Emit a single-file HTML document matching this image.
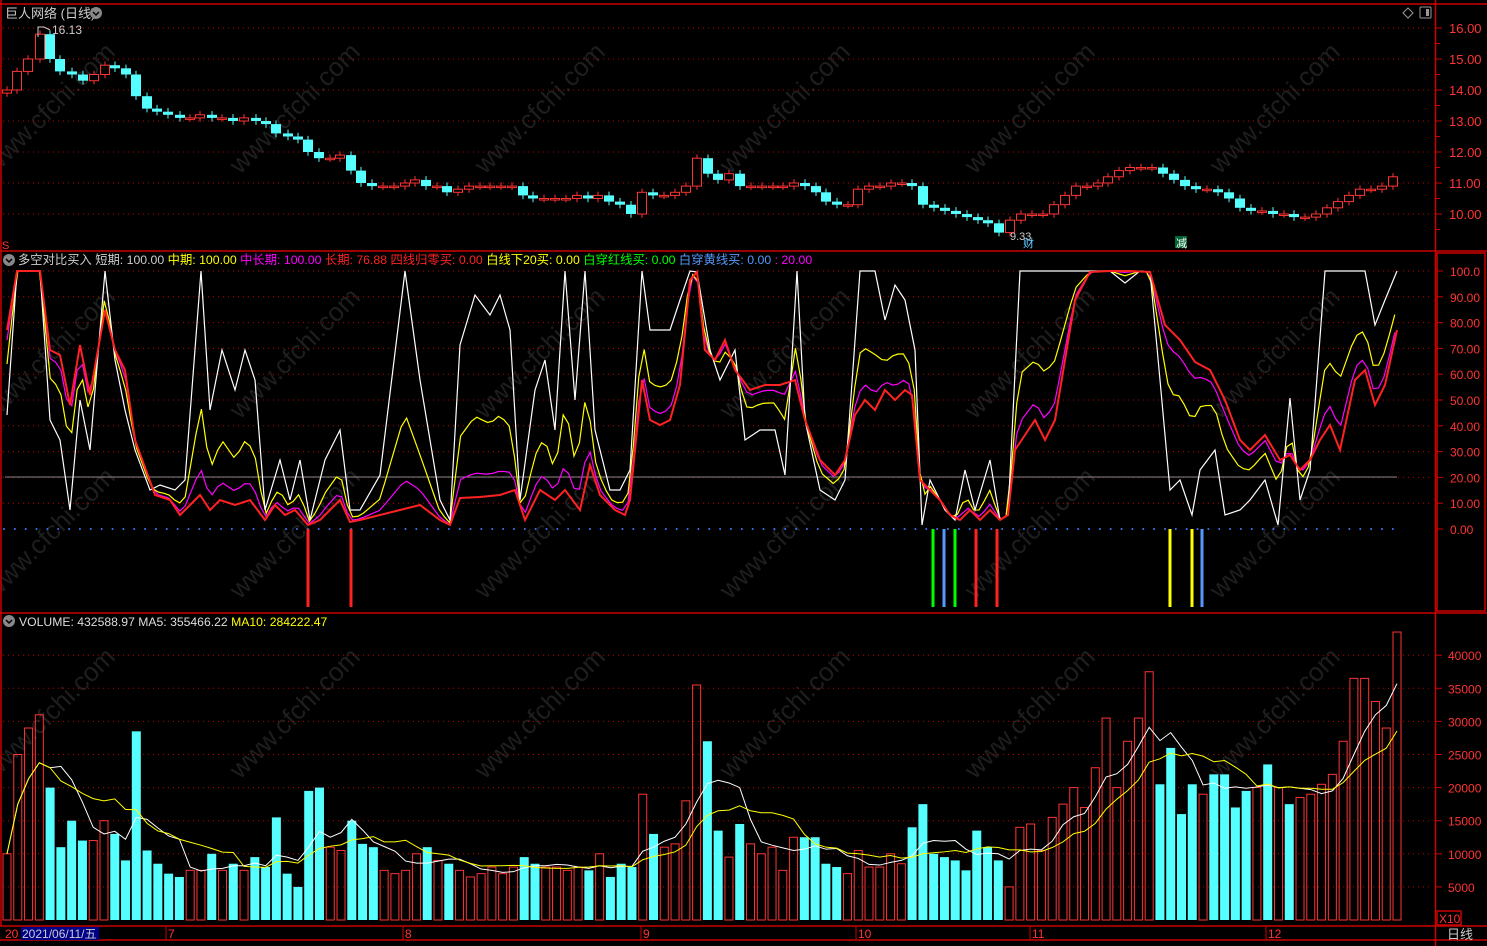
<!DOCTYPE html>
<html><head><meta charset="utf-8"><style>
html,body{margin:0;padding:0;background:#000;width:1487px;height:946px;overflow:hidden}
svg{display:block}
text{font-family:"Liberation Sans","Noto Sans CJK SC",sans-serif}
</style></head><body>
<svg id="s" width="1487" height="946" xmlns="http://www.w3.org/2000/svg">
<rect width="1487" height="946" fill="#000"/>
<g id="wm"></g>
<g id="g"></g>
<g stroke="#c00" stroke-width="1.5" fill="none">
<line x1="0" y1="4" x2="1487" y2="4"/>
<line x1="1" y1="0" x2="1" y2="926"/>
<line x1="1435.5" y1="0" x2="1435.5" y2="946"/>
<line x1="0" y1="251" x2="1487" y2="251"/>
<line x1="0" y1="613" x2="1487" y2="613"/>
<line x1="0" y1="926" x2="1487" y2="926"/>
<line x1="0" y1="940" x2="1487" y2="940"/>
<rect x="1437" y="253" width="48" height="358"/>
<rect x="1437" y="911" width="24" height="14"/>
</g>
<text x="5" y="18" fill="#ccc" font-size="13">巨人网络 (日线)</text>
<circle cx="96" cy="13" r="6" fill="#888"/><path d="M93 12l3 3 3-3" stroke="#000" stroke-width="1.5" fill="none"/>
<path d="M1403 13l5-5 5 5-5 5z" stroke="#999" fill="none"/>
<rect x="1420" y="7" width="11" height="11" rx="1" stroke="#999" fill="none"/><rect x="1426" y="9" width="3" height="7" fill="#999"/>
<text x="52" y="34" fill="#ccc" font-size="12">16.13</text>
<path d="M38 37v-10h6M44 27l6 3" stroke="#ccc" fill="none"/>
<text x="1010" y="240" fill="#ccc" font-size="11">9.33</text>
<text x="1023" y="247" fill="#6cf" font-size="11">财</text>
<rect x="1175" y="236" width="12" height="12" fill="#063"/><text x="1176" y="247" fill="#fff" font-size="11">减</text>
<text x="2" y="249" fill="#f33" font-size="11">S</text>

<circle cx="9" cy="260" r="6" fill="#888"/><path d="M6 259l3 3 3-3" stroke="#000" stroke-width="1.5" fill="none"/>
<text x="18" y="264" font-size="12.3"><tspan fill="#ccc">多空对比买入 短期: 100.00 </tspan><tspan fill="#ff0">中期: 100.00 </tspan><tspan fill="#f0f">中长期: 100.00 </tspan><tspan fill="#f22">长期: 76.88 四线归零买: 0.00 </tspan><tspan fill="#ff0">白线下20买: 0.00 </tspan><tspan fill="#0f0">白穿红线买: 0.00 </tspan><tspan fill="#59f">白穿黄线买: 0.00 </tspan><tspan fill="#f0f">: 20.00</tspan></text>

<circle cx="9" cy="621" r="6" fill="#888"/><path d="M6 620l3 3 3-3" stroke="#000" stroke-width="1.5" fill="none"/>
<text x="19" y="626" font-size="12.2"><tspan fill="#ddd">VOLUME: 432588.97  MA5: 355466.22  </tspan><tspan fill="#ff0">MA10: 284222.47</tspan></text>

<text x="1439" y="923" fill="#f33" font-size="12">X10</text>
<text x="1447" y="939" fill="#ccc" font-size="13">日线</text>
<text x="5" y="938" fill="#f33" font-size="12">20</text>
<rect x="21" y="927" width="78" height="13" fill="#008"/>
<text x="22" y="938" fill="#ccc" font-size="12">2021/06/11/五</text>
<g fill="#f33" font-size="12">
<text x="168" y="938">7</text><text x="405" y="938">8</text><text x="643" y="938">9</text><text x="858" y="938">10</text><text x="1032" y="938">11</text><text x="1268" y="938">12</text></g>
<g stroke="#c00"><line x1="166" y1="926" x2="166" y2="940"/><line x1="403" y1="926" x2="403" y2="940"/><line x1="641" y1="926" x2="641" y2="940"/><line x1="856" y1="926" x2="856" y2="940"/><line x1="1030" y1="926" x2="1030" y2="940"/><line x1="1266" y1="926" x2="1266" y2="940"/></g>
</svg>
<script>
var NS="http://www.w3.org/2000/svg",G=document.getElementById("g"),W=document.getElementById("wm");
function el(t,a,p){var e=document.createElementNS(NS,t);for(var k in a)e.setAttribute(k,a[k]);(p||G).appendChild(e);return e;}
function tx(x,y,s,c,fs,p){var e=el("text",{x:x,y:y,fill:c,"font-size":fs},p);e.textContent=s;return e;}
[175,420,600,780].forEach(function(y,j){for(var x=-5;x<1400;x+=245){var t=tx(0,0,"www.cfchi.com","#1e1e1e",26,W);t.setAttribute("transform","translate("+x+","+y+") rotate(-45)");}});
function dl(y,x2){el("line",{x1:3,y1:y,x2:x2||1433,y2:y,stroke:"#b00","stroke-dasharray":"1,4"});}
for(var p=10;p<=16;p++){var y=28+(16-p)*31;dl(y);el("line",{x1:1436,y1:y,x2:1442,y2:y,stroke:"#c00"});el("line",{x1:1436,y1:y+15.5,x2:1440,y2:y+15.5,stroke:"#c00"});tx(1449,y+5,p.toFixed(2),"#f33",13);}
for(var v=0;v<=100;v+=10){var y=529-v*2.58;if(v>0)dl(y);el("line",{x1:1437,y1:y,x2:1443,y2:y,stroke:"#c00"});tx(1450,y+5,v==100?"100.0":v.toFixed(2),"#f33",12);}
el("line",{x1:5,y1:477,x2:1397,y2:477,stroke:"#888"});
for(var x=4;x<1400;x+=10.85)el("circle",{cx:x,cy:529,r:1,fill:"#47f"});
for(var k=5000;k<=40000;k+=5000){var y=920-k/5000*33.1;dl(y);el("line",{x1:1436,y1:y,x2:1442,y2:y,stroke:"#c00"});tx(1448,y+5,k,"#f33",12);}
var pk=[[7,14],[17,14.6],[28,15],[40,15.8],[50,15],[60,14.6],[72,14.5],[83,14.3],[94,14.5],[105,14.8],[115,14.7],[126,14.5],[136,13.8],[147,13.4],[157,13.3],[168,13.2],[180,13.1],[190,13.1],[200,13.2],[212,13.1],[222,13.1],[233,13],[244,13.1],[256,13],[266,12.9],[276,12.6],[288,12.5],[298,12.4],[308,12],[319,11.8],[330,11.8],[340,11.9],[351,11.4],[361,11],[372,10.9],[383,10.9],[394,10.9],[405,11],[415,11.1],[426,10.9],[437,10.9],[447,10.7],[458,10.8],[469,10.9],[480,10.9],[490,10.9],[501,10.9],[512,10.9],[523,10.6],[533,10.5],[544,10.5],[555,10.5],[566,10.5],[577,10.6],[588,10.5],[598,10.6],[609,10.4],[620,10.3],[631,10],[642,10.7],[653,10.6],[664,10.6],[675,10.7],[686,10.9],[697,11.8],[708,11.3],[718,11.1],[729,11.3],[740,10.9],[751,10.9],[762,10.9],[773,10.9],[783,10.9],[794,11],[805,10.9],[816,10.7],[826,10.4],[837,10.3],[848,10.3],[858,10.8],[869,10.9],[880,10.9],[891,11],[902,11],[912,10.9],[923,10.3],[934,10.2],[945,10.1],[956,10],[967,9.9],[978,9.8],[988,9.7],[999,9.4],[1010,9.8],[1021,10],[1032,10],[1043,10],[1054,10.3],[1065,10.6],[1076,10.9],[1087,10.9],[1098,11],[1108,11.2],[1119,11.4],[1130,11.5],[1141,11.5],[1152,11.5],[1163,11.3],[1174,11.1],[1185,10.9],[1196,10.8],[1207,10.8],[1218,10.7],[1229,10.5],[1240,10.2],[1251,10.1],[1262,10.1],[1273,10],[1284,10],[1294,9.9],[1305,9.9],[1316,10],[1327,10.2],[1338,10.4],[1349,10.6],[1360,10.8],[1371,10.8],[1382,10.9],[1393,11.2]];
function py(p){return 28+(16-p)*31;}
var up=[];
pk.forEach(function(c,i){var o=i?pk[i-1][1]:13.9,cl=c[1],x=c[0];var u=cl>=o;up.push(u);var t=Math.max(o,cl),b=Math.min(o,cl);
var col=u?"#f33":"#5ff";el("line",{x1:x,y1:py(t+0.12),x2:x,y2:py(b-0.12),stroke:col});
var h=Math.max(py(b)-py(t),1.5);if(u)el("rect",{x:x-4.5,y:py(t),width:9,height:h,fill:"#000",stroke:col});else el("rect",{x:x-5,y:py(t),width:10,height:h,fill:col});});
function pl(pts,c,w){el("polyline",{points:pts.map(function(p){return p.join(",")}).join(" "),fill:"none",stroke:c,"stroke-width":w||1.2});}
var R=[[7,330],[17,271],[40,271],[50,350],[60,355],[70,405],[80,345],[90,395],[105,310],[115,350],[125,370],[135,440],[155,495],[170,500],[180,515],[190,505],[200,495],[210,510],[220,500],[235,505],[250,500],[265,520],[275,505],[285,515],[295,510],[308,525],[320,520],[330,510],[340,500],[350,522],[360,520],[380,515],[400,510],[420,505],[440,520],[450,525],[460,498],[480,497],[500,495],[515,490],[525,520],[540,490],[555,500],[565,490],[580,510],[590,465],[600,495],[615,510],[625,515],[630,500],[642,380],[650,420],[660,425],[670,420],[680,385],[690,280],[697,272],[705,350],[715,360],[725,340],[735,370],[750,390],[765,385],[780,385],[795,380],[805,420],[820,460],[835,475],[845,460],[855,415],[865,400],[875,410],[885,390],[895,400],[905,390],[912,395],[920,480],[930,490],[940,500],[950,515],[960,520],[970,510],[980,520],[990,510],[1000,520],[1008,515],[1015,450],[1025,435],[1035,420],[1045,440],[1055,420],[1075,300],[1090,272],[1110,271],[1130,271],[1150,272],[1165,325],[1180,340],[1195,362],[1210,370],[1225,400],[1240,440],[1250,450],[1265,435],[1280,460],[1290,455],[1300,470],[1310,460],[1320,440],[1330,425],[1340,450],[1355,380],[1365,370],[1375,405],[1385,385],[1397,330]];
var Wt=[[7,415],[17,271],[40,271],[50,420],[60,440],[70,510],[80,400],[90,450],[105,271],[115,360],[125,410],[135,450],[150,490],[160,485],[175,490],[185,480],[201,271],[210,410],[222,350],[235,390],[245,350],[255,380],[265,510],[280,460],[290,500],[300,460],[310,520],[325,460],[340,430],[350,510],[360,510],[380,475],[405,271],[420,380],[440,500],[450,520],[460,345],[475,295],[490,315],[500,295],[510,330],[520,500],[535,390],[545,360],[555,430],[565,271],[575,400],[585,271],[595,430],[610,490],[620,490],[630,470],[642,271],[650,330],[660,330],[670,330],[680,300],[690,271],[697,272],[710,350],[720,380],[735,350],[745,440],[760,430],[775,430],[785,475],[797,271],[805,420],[820,490],[835,500],[845,480],[860,271],[875,271],[885,320],[895,285],[905,300],[915,350],[922,525],[930,480],[945,510],[955,520],[965,470],[975,510],[990,460],[1000,520],[1008,515],[1020,271],[1060,271],[1085,271],[1110,271],[1125,283],[1140,271],[1150,272],[1160,380],[1170,490],[1180,480],[1192,515],[1200,470],[1215,450],[1225,515],[1240,510],[1250,500],[1265,480],[1278,525],[1290,398],[1300,500],[1310,470],[1325,271],[1365,271],[1375,325],[1385,300],[1397,271]];
function at(a,x){for(var i=1;i<a.length;i++)if(a[i][0]>=x){var t=(x-a[i-1][0])/(a[i][0]-a[i-1][0]);return a[i-1][1]+t*(a[i][1]-a[i-1][1]);}return a[a.length-1][1];}
var Y=[],M=[];for(var x=7;x<=1397;x+=5.4){var w=at(Wt,x),r=at(R,x);Y.push([x,0.4*w+0.6*r]);M.push([x,0.12*w+0.88*r]);}
pl(M,"#f0f");pl(Y,"#ff0");pl(Wt,"#fff");pl(R,"#f22",2);
[[308,"#f22"],[351,"#f22"],[933,"#0f0"],[944,"#59f"],[955,"#0f0"],[976,"#f22"],[997,"#f22"],[1170,"#ff0"],[1192,"#ff0"],[1202,"#59f"]].forEach(function(s){el("line",{x1:s[0],y1:529,x2:s[0],y2:607,stroke:s[1],"stroke-width":3});});
var V=[10,25,29,31,20,11,15,12,12,15,13,9,28.5,10.5,8.5,7,6.5,7.5,7.5,10,7.5,8.5,7.5,9.5,8,15.5,7,5,19.5,20,11,10.5,15,11.5,11,7.5,7,7.5,10,11,9,8.5,7.5,6.5,7,8,7,8,9.5,8.5,8,8,7.5,8,7.5,10,6.5,8.5,8,19,13,11,11.5,18,35.5,27,13.5,9.5,14.5,11.5,10,11,7.5,12.5,12.5,12.5,8.5,8,7,10.5,8,8,10,8.5,14,17.5,10,9.5,9,7.5,13.5,11,9,5,14,14.5,10.5,15.5,17.5,20,17,23,30.5,20,27,30.5,37.5,20.5,26,16,20.5,19,22,22,17,19.5,20,23.5,20,17.5,18.5,19,20.5,22,27,36.5,36.5,33,29,43.5];
var n=V.length,sp=(1397-7)/(n-1);function vy(v){return 920-v*1000/5000*33.1;}
V.forEach(function(v,i){var x=7+i*sp,u=i<pk.length?up[i]:true;var y=vy(v);if(u)el("rect",{x:x-4,y:y,width:8,height:920-y,fill:"none",stroke:"#f33"});else el("rect",{x:x-4.5,y:y,width:9,height:920-y,fill:"#5ff"});});
function ma(k){var o=[];for(var i=0;i<n;i++){var s=0,c=0;for(var j=Math.max(0,i-k+1);j<=i;j++){s+=V[j];c++;}o.push([7+i*sp,vy(s/c)]);}return o;}
pl(ma(5),"#fff",1);pl(ma(10),"#ff0",1);
</script>
</body></html>
